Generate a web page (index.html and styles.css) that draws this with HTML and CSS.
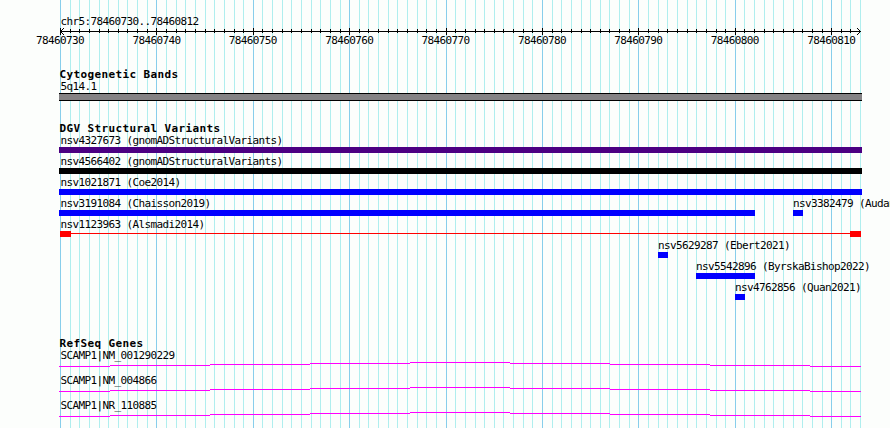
FILE: index.html
```
<!DOCTYPE html>
<html>
<head>
<meta charset="utf-8">
<title>chr5:78460730..78460812</title>
<link rel="stylesheet" href="styles.css">
</head>
<body>

<div id="browser">
  <svg class="gridlines" width="890" height="428">
    <path id="gridminor" />
    <path id="gridmajor" />
  </svg>

  <div class="ruler">
    <div class="label">chr5:78460730..78460812</div>
    <svg class="axis" width="890" height="9">
      <path id="axisticks" />
      <path d="M60 4h801v1h-801z M61 3h1v3h-1z M62 2h1v1h-1z M62 6h1v1h-1z M63 1h1v1h-1z M63 7h1v1h-1z" />
      <path d="M859 3h1v3h-1z M858 2h1v1h-1z M858 6h1v1h-1z M857 1h1v1h-1z M857 7h1v1h-1z" />
    </svg>
    <div class="positions">
      <span>78460730</span><span>78460740</span><span>78460750</span>
      <span>78460760</span><span>78460770</span><span>78460780</span>
      <span>78460790</span><span>78460800</span><span>78460810</span>
    </div>
  </div>

  <div class="track cytoband">
    <h4>Cytogenetic Bands</h4>
    <div class="label">5q14.1</div>
    <div class="band"></div>
  </div>

  <div class="track variants">
    <h4>DGV Structural Variants</h4>
    <div class="row"><div class="feature full"><div class="label">nsv4327673 (gnomADStructuralVariants)</div><div class="bar complex"></div></div></div>
    <div class="row"><div class="feature full"><div class="label">nsv4566402 (gnomADStructuralVariants)</div><div class="bar other"></div></div></div>
    <div class="row"><div class="feature full"><div class="label">nsv1021871 (Coe2014)</div><div class="bar"></div></div></div>
    <div class="row">
      <div class="feature chaisson"><div class="label">nsv3191084 (Chaisson2019)</div><div class="bar"></div></div>
      <div class="feature point audano"><div class="label">nsv3382479 (Audan</div><div class="bar"></div></div>
    </div>
    <div class="row"><div class="feature full"><div class="label">nsv1123963 (Alsmadi2014)</div><div class="span"><i></i><i></i></div></div></div>
    <div class="row"><div class="feature point ebert"><div class="label">nsv5629287 (Ebert2021)</div><div class="bar"></div></div></div>
    <div class="row"><div class="feature point byrska"><div class="label">nsv5542896 (ByrskaBishop2022)</div><div class="bar"></div></div></div>
    <div class="row"><div class="feature point quan"><div class="label">nsv4762856 (Quan2021)</div><div class="bar"></div></div></div>
  </div>

  <div class="track genes">
    <h4>RefSeq Genes</h4>
    <div class="gene">
      <div class="label">SCAMP1|NM_001290229</div>
      <svg width="890" height="5"><path class="intron" /></svg>
    </div>
    <div class="gene">
      <div class="label">SCAMP1|NM_004866</div>
      <svg width="890" height="5"><path class="intron" /></svg>
    </div>
    <div class="gene">
      <div class="label">SCAMP1|NR_110885</div>
      <svg width="890" height="5"><path class="intron" /></svg>
    </div>
  </div>
</div>

<script type="text/javascript" src="browser.js"></script>
</body>
</html>
```
FILE: styles.css
```
body { margin: 0; background: #fcfefc; }
div#browser { position: relative; width: 890px; height: 428px; overflow: hidden; color: black; font-family: "DejaVu Sans Mono", "Liberation Mono", monospace; font-size: 11px; }
div#browser svg { display: block; shape-rendering: crispEdges; }

/* the lines run behind every track */
svg.gridlines { position: absolute; left: 0; top: 0; z-index: -1; }
#gridminor { fill: #afeeee; }
#gridmajor { fill: #87ceeb; }

.label { height: 12px; padding-left: 60.4px; line-height: 12px; letter-spacing: -0.622px; white-space: pre; }
h4 { margin: 0; height: 11px; padding-left: 59.4px; font-size: 11px; line-height: 12px; letter-spacing: 0.378px; white-space: pre; }

.ruler { height: 69px; padding-top: 16px; box-sizing: border-box; }
.ruler .label { height: 11px; }
.positions { display: grid; grid-template-columns: repeat(9, 96.4px); padding-left: 36px; line-height: 12px; margin-top: -1px; letter-spacing: -0.622px; }

.cytoband { height: 54px; }
.cytoband .label { height: 13px; line-height: 14px; }
.band { width: 803px; height: 8px; margin-left: 59px; box-sizing: border-box; background: #848284; border: solid black; border-width: 1px 0; }

.variants { height: 215px; }
.variants h4 { height: 12px; }
.row { display: flex; height: 21px; }
.feature { flex: none; }
.feature .label { padding-left: 1.4px; }
.point .label { padding-left: 0; }
.full { width: 803px; margin-left: 59px; }
.bar { height: 6px; background: blue; }
.complex { background: #4b0082; }
.other { background: black; }

.chaisson { width: 696px; margin-left: 59px; }
.audano { width: 10px; margin-left: 38px; }
.ebert { width: 10px; margin-left: 658px; }
.byrska { width: 59px; margin-left: 696px; }
.quan { width: 10px; margin-left: 735px; }

.span { display: flex; justify-content: space-between; width: 801px; margin-left: 1px; background: linear-gradient(red, red) 0 2px / 100% 1px no-repeat; }
.span i { width: 11px; height: 6px; background: red; }

.genes h4 { height: 12px; }
.gene { height: 25px; }
.gene .label { height: 12px; }
.intron { fill: magenta; }
```
FILE: browser.js
```
var left = 60, perbase = 9.64, nbases = 83;

function basex(i) { return left + Math.round(i*perbase); }

function drawgrid()
{
	var minor = "", major = "", ticks = "";
	for (var i = 0; i <= nbases; i++) {
		var x = basex(i);
		if (i % 10 == 0) {
			major += "M"+x+" 0h1v428h-1z";
			ticks += "M"+x+" 1h1v7h-1z";
		} else {
			minor += "M"+x+" 0h1v428h-1z";
			if (i != nbases)
				ticks += "M"+x+" 2h1v4h-1z";
		}
	}
	document.getElementById("gridminor").setAttribute("d", minor);
	document.getElementById("gridmajor").setAttribute("d", major);
	document.getElementById("axisticks").setAttribute("d", ticks);
}

// the intron rises a pixel every 100px up to the middle, then falls again
function drawintrons()
{
	var xs = [59, 110, 210, 310, 410, 510, 610, 710, 810, 861];
	var d = "";
	for (var i = 0; i < xs.length - 1; i++)
		d += "M"+xs[i]+" "+Math.abs(4 - i)+"H"+xs[i+1]+"v1H"+xs[i]+"z";
	var paths = document.querySelectorAll(".intron");
	for (var j = 0; j < paths.length; j++)
		paths[j].setAttribute("d", d);
}

drawgrid();
drawintrons();
```
